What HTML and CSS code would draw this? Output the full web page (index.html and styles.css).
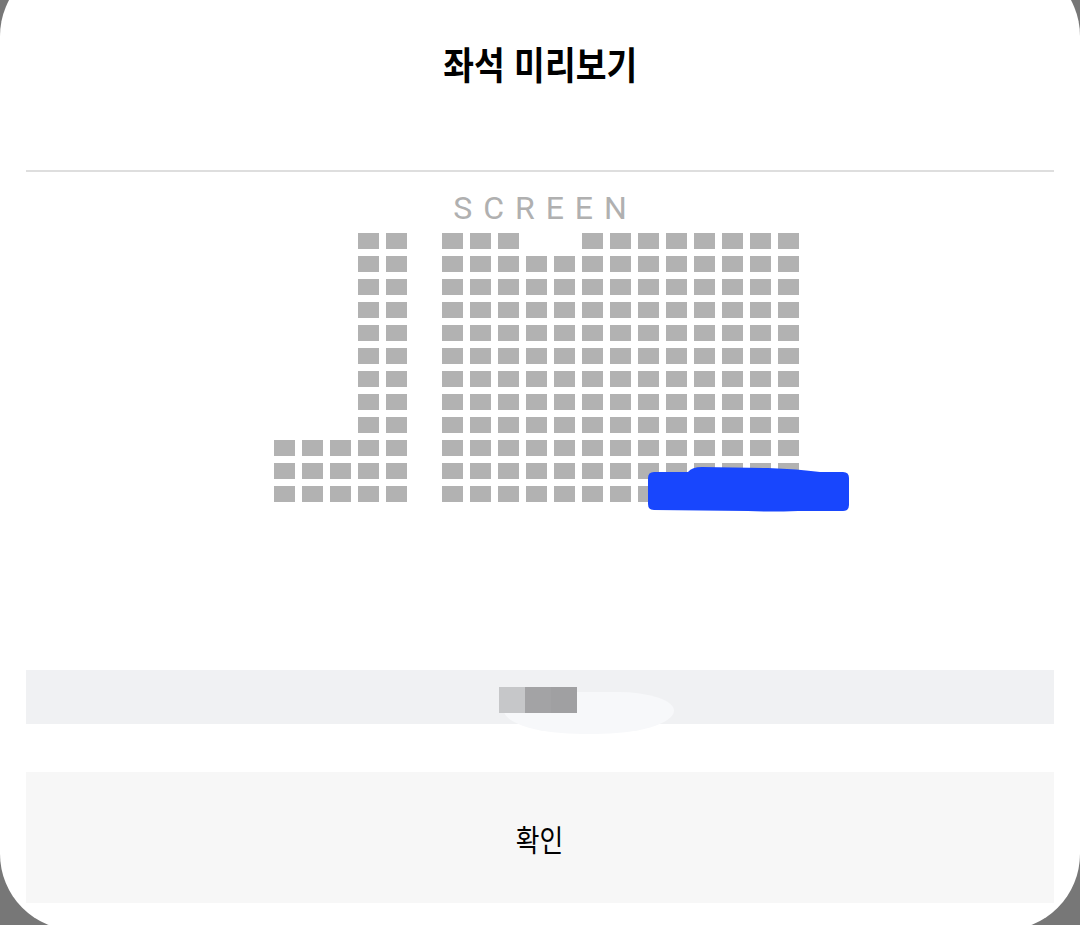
FILE: index.html
```html
<!DOCTYPE html>
<html lang="ko">
<head>
<meta charset="utf-8">
<title>좌석 미리보기</title>
<link rel="stylesheet" href="styles.css">
</head>
<body>
<div class="sheet">
  <div class="head"><h1 class="title">좌석 미리보기</h1></div>
  <div class="divider"></div>
  <div class="screen">SCREEN</div>
  <div class="map">
    <div class="seats">
      <span class="e"></span><span class="e"></span><span class="e"></span><span class="s"></span><span class="s"></span><span class="e"></span><span class="s"></span><span class="s"></span><span class="s"></span><span class="e"></span><span class="e"></span><span class="s"></span><span class="s"></span><span class="s"></span><span class="s"></span><span class="s"></span><span class="s"></span><span class="s"></span><span class="s"></span>
      <span class="e"></span><span class="e"></span><span class="e"></span><span class="s"></span><span class="s"></span><span class="e"></span><span class="s"></span><span class="s"></span><span class="s"></span><span class="s"></span><span class="s"></span><span class="s"></span><span class="s"></span><span class="s"></span><span class="s"></span><span class="s"></span><span class="s"></span><span class="s"></span><span class="s"></span>
      <span class="e"></span><span class="e"></span><span class="e"></span><span class="s"></span><span class="s"></span><span class="e"></span><span class="s"></span><span class="s"></span><span class="s"></span><span class="s"></span><span class="s"></span><span class="s"></span><span class="s"></span><span class="s"></span><span class="s"></span><span class="s"></span><span class="s"></span><span class="s"></span><span class="s"></span>
      <span class="e"></span><span class="e"></span><span class="e"></span><span class="s"></span><span class="s"></span><span class="e"></span><span class="s"></span><span class="s"></span><span class="s"></span><span class="s"></span><span class="s"></span><span class="s"></span><span class="s"></span><span class="s"></span><span class="s"></span><span class="s"></span><span class="s"></span><span class="s"></span><span class="s"></span>
      <span class="e"></span><span class="e"></span><span class="e"></span><span class="s"></span><span class="s"></span><span class="e"></span><span class="s"></span><span class="s"></span><span class="s"></span><span class="s"></span><span class="s"></span><span class="s"></span><span class="s"></span><span class="s"></span><span class="s"></span><span class="s"></span><span class="s"></span><span class="s"></span><span class="s"></span>
      <span class="e"></span><span class="e"></span><span class="e"></span><span class="s"></span><span class="s"></span><span class="e"></span><span class="s"></span><span class="s"></span><span class="s"></span><span class="s"></span><span class="s"></span><span class="s"></span><span class="s"></span><span class="s"></span><span class="s"></span><span class="s"></span><span class="s"></span><span class="s"></span><span class="s"></span>
      <span class="e"></span><span class="e"></span><span class="e"></span><span class="s"></span><span class="s"></span><span class="e"></span><span class="s"></span><span class="s"></span><span class="s"></span><span class="s"></span><span class="s"></span><span class="s"></span><span class="s"></span><span class="s"></span><span class="s"></span><span class="s"></span><span class="s"></span><span class="s"></span><span class="s"></span>
      <span class="e"></span><span class="e"></span><span class="e"></span><span class="s"></span><span class="s"></span><span class="e"></span><span class="s"></span><span class="s"></span><span class="s"></span><span class="s"></span><span class="s"></span><span class="s"></span><span class="s"></span><span class="s"></span><span class="s"></span><span class="s"></span><span class="s"></span><span class="s"></span><span class="s"></span>
      <span class="e"></span><span class="e"></span><span class="e"></span><span class="s"></span><span class="s"></span><span class="e"></span><span class="s"></span><span class="s"></span><span class="s"></span><span class="s"></span><span class="s"></span><span class="s"></span><span class="s"></span><span class="s"></span><span class="s"></span><span class="s"></span><span class="s"></span><span class="s"></span><span class="s"></span>
      <span class="s"></span><span class="s"></span><span class="s"></span><span class="s"></span><span class="s"></span><span class="e"></span><span class="s"></span><span class="s"></span><span class="s"></span><span class="s"></span><span class="s"></span><span class="s"></span><span class="s"></span><span class="s"></span><span class="s"></span><span class="s"></span><span class="s"></span><span class="s"></span><span class="s"></span>
      <span class="s"></span><span class="s"></span><span class="s"></span><span class="s"></span><span class="s"></span><span class="e"></span><span class="s"></span><span class="s"></span><span class="s"></span><span class="s"></span><span class="s"></span><span class="s"></span><span class="s"></span><span class="s"></span><span class="s"></span><span class="s"></span><span class="s"></span><span class="s"></span><span class="s"></span>
      <span class="s"></span><span class="s"></span><span class="s"></span><span class="s"></span><span class="s"></span><span class="e"></span><span class="s"></span><span class="s"></span><span class="s"></span><span class="s"></span><span class="s"></span><span class="s"></span><span class="s"></span><span class="s"></span><span class="s"></span><span class="s"></span><span class="s"></span><span class="s"></span><span class="s"></span>
    </div>
    <svg class="scribble" width="202" height="48" viewBox="0 0 202 48" aria-hidden="true">
      <path d="M0,13 Q0,7 6,7 L40,7 Q44,2 54,2 L120,3 Q150,4 172,7 L195,7 Q201,7 201,13 L201,40 Q201,46 195,46 L150,46 Q120,47 100,46 L6,45 Q0,45 0,39 Z" fill="#1846fd"/>
    </svg>
  </div>
  <div class="info">
    <div class="smudge"></div>
    <div class="mosaic"><span class="m1"></span><span class="m2"></span><span class="m3"></span></div>
  </div>
  <button class="confirm" type="button"><span class="confirm-label">확인</span></button>
</div>
</body>
</html>
```
FILE: styles.css
```css
* { box-sizing: border-box; }
html, body {
  margin: 0;
  height: 925px;
  overflow: hidden;
  background: #777777;
}
.sheet {
  margin-top: -40px;
  height: 970px;
  background: #ffffff;
  border-radius: 76px;
  padding: 40px 26px 0;
  font-family: "Noto Sans CJK KR", "Noto Sans", sans-serif;
}
.head {
  height: 170px;
  padding-top: 44px;
  display: flex;
  justify-content: center;
}
.title {
  margin: 0;
  font-size: 38px;
  line-height: 38px;
  font-weight: 700;
  color: #000;
  transform: scaleX(0.88);
  white-space: nowrap;
}
.divider {
  height: 2px;
  background: #dedede;
}
.screen {
  margin-top: 17px;
  height: 38px;
  line-height: 38px;
  text-align: center;
  font-family: Roboto, "Liberation Sans", sans-serif;
  font-size: 32px;
  letter-spacing: 11px;
  padding-left: 11px;
  color: #b0b0b0;
}
.map {
  position: relative;
  margin-top: 6px;
  margin-left: 248px;
  width: 525px;
}
.seats {
  display: grid;
  grid-template-columns: repeat(19, 21px);
  grid-auto-rows: 16px;
  gap: 7px;
}
.s { background: #b2b2b2; }
.e { visibility: hidden; }
.scribble {
  position: absolute;
  left: 374px;
  top: 232px;
}
.info {
  position: relative;
  margin-top: 168px;
  height: 54px;
  background: #f0f1f3;
  padding-left: 473px;
  padding-top: 17px;
}
.smudge {
  position: absolute;
  left: 478px;
  top: 22px;
  width: 170px;
  height: 42px;
  background: #f7f8fa;
  border-radius: 10px 60px 50% 50% / 10px 20px 60% 60%;
}
.mosaic {
  position: relative;
  display: flex;
  height: 26px;
}
.mosaic span { display: block; height: 26px; }
.m1 { width: 26px; background: #c6c7c9; }
.m2 { width: 26px; background: #a3a3a5; }
.m3 { width: 26px; background: #a0a0a2; }
.confirm {
  display: flex;
  align-items: center;
  justify-content: center;
  width: 100%;
  height: 131px;
  margin-top: 48px;
  border: 0;
  padding: 0;
  background: #f7f7f7;
  font-family: "Noto Sans CJK KR", "Noto Sans", sans-serif;
  color: #000;
}
.confirm-label {
  display: block;
  font-size: 30px;
  line-height: 30px;
  transform: scaleX(0.86);
}
```
